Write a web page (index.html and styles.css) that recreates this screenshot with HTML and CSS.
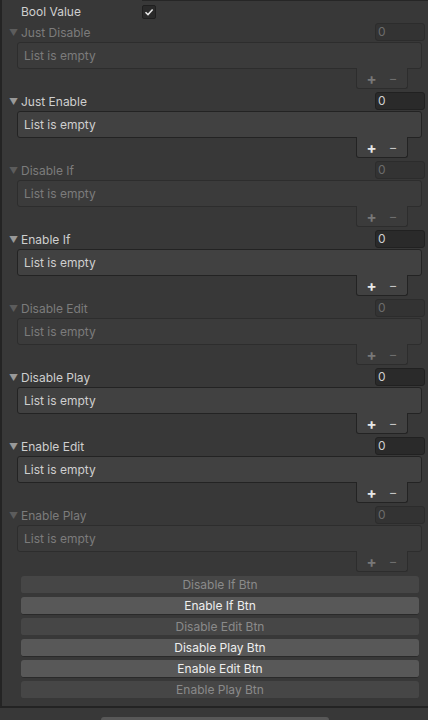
FILE: index.html
```html
<!DOCTYPE html>
<html>
<head>
<meta charset="utf-8">
<link rel="stylesheet" href="styles.css">
</head>
<body>
<div class="panel">
  <div class="cut"></div>
  <div class="bool-row">
    <span class="label">Bool Value</span>
    <span class="check"><svg width="10" height="10" viewBox="0 0 10 10"><path d="M1.5 5.2 L4 7.6 L8.6 2.4" fill="none" stroke="#e8e8e8" stroke-width="1.5"/></svg></span>
  </div>

  <div class="section off">
    <div class="head"><span class="tri">▼</span><span class="label">Just Disable</span><span class="count">0</span></div>
    <div class="box">List is empty</div>
    <div class="foot"><span class="plus">+</span><span class="minus">−</span></div>
  </div>
  <div class="section">
    <div class="head"><span class="tri">▼</span><span class="label">Just Enable</span><span class="count">0</span></div>
    <div class="box">List is empty</div>
    <div class="foot"><span class="plus">+</span><span class="minus">−</span></div>
  </div>
  <div class="section off">
    <div class="head"><span class="tri">▼</span><span class="label">Disable If</span><span class="count">0</span></div>
    <div class="box">List is empty</div>
    <div class="foot"><span class="plus">+</span><span class="minus">−</span></div>
  </div>
  <div class="section">
    <div class="head"><span class="tri">▼</span><span class="label">Enable If</span><span class="count">0</span></div>
    <div class="box">List is empty</div>
    <div class="foot"><span class="plus">+</span><span class="minus">−</span></div>
  </div>
  <div class="section off">
    <div class="head"><span class="tri">▼</span><span class="label">Disable Edit</span><span class="count">0</span></div>
    <div class="box">List is empty</div>
    <div class="foot"><span class="plus">+</span><span class="minus">−</span></div>
  </div>
  <div class="section">
    <div class="head"><span class="tri">▼</span><span class="label">Disable Play</span><span class="count">0</span></div>
    <div class="box">List is empty</div>
    <div class="foot"><span class="plus">+</span><span class="minus">−</span></div>
  </div>
  <div class="section">
    <div class="head"><span class="tri">▼</span><span class="label">Enable Edit</span><span class="count">0</span></div>
    <div class="box">List is empty</div>
    <div class="foot"><span class="plus">+</span><span class="minus">−</span></div>
  </div>
  <div class="section off">
    <div class="head"><span class="tri">▼</span><span class="label">Enable Play</span><span class="count">0</span></div>
    <div class="box">List is empty</div>
    <div class="foot"><span class="plus">+</span><span class="minus">−</span></div>
  </div>

  <div class="buttons">
    <div class="btn off">Disable If Btn</div>
    <div class="btn">Enable If Btn</div>
    <div class="btn off">Disable Edit Btn</div>
    <div class="btn">Disable Play Btn</div>
    <div class="btn">Enable Edit Btn</div>
    <div class="btn off">Enable Play Btn</div>
  </div>
</div>
<div class="bottom">
  <div class="big-btn"></div>
</div>
</body>
</html>
```
FILE: styles.css
```css
html, body {
  margin: 0;
  padding: 0;
  background: #383838;
  font-family: Inter, "Noto Sans", sans-serif;
  font-size: 12px;
  color: #cfcfcf;
  overflow: hidden;
}

.panel {
  border-left: 2px solid #242424;
  box-sizing: border-box;
  border-bottom: 2px solid #232323;
  height: 708px;
}

.cut {
  margin-left: 140px;
  width: 284px;
  height: 0;
  border: 1px solid #262626;
  border-top: none;
  border-radius: 0 0 3px 3px;
}

.bool-row {
  height: 21px;
  display: flex;
  align-items: center;
}

.bool-row .label {
  margin-left: 19px;
  width: 121px;
}

.check {
  width: 12px;
  height: 12px;
  border: 1px solid #1f1f1f;
  background: #2a2a2a;
  border-radius: 2px;
  display: flex;
  align-items: center;
  justify-content: center;
}

.section {
  height: 69px;
  display: flex;
  flex-direction: column;
}

.head {
  height: 20px;
  display: flex;
  align-items: center;
}

.tri {
  margin-left: 7px;
  width: 12px;
  font-size: 9px;
  color: #999999;
}

.count {
  margin-left: auto;
  margin-right: 3px;
  width: 46px;
  height: 16px;
  line-height: 16px;
  border: 1px solid #212121;
  background: #2a2a2a;
  border-radius: 3px;
  padding-left: 2px;
  color: #cfcfcf;
}

.box {
  margin-left: 15px;
  margin-right: 6px;
  height: 25px;
  line-height: 25px;
  border: 1px solid #232323;
  border-radius: 3px;
  background: #414141;
  padding-left: 6px;
  position: relative;
  z-index: 1;
}

.foot {
  align-self: flex-end;
  margin-right: 20px;
  margin-top: -1px;
  width: 50px;
  height: 20px;
  border: 1px solid #232323;
  border-top: none;
  border-radius: 0 0 3px 3px;
  background: #414141;
  position: relative;
  z-index: 2;
  display: flex;
  align-items: center;
  justify-content: center;
  gap: 12px;
  color: #e8e8e8;
}

.plus {
  font-size: 15px;
  font-weight: 700;
}

.minus {
  font-size: 13px;
  color: #c4c4c4;
}

.off .label,
.off .box {
  color: #7c7c7c;
}

.off .tri {
  color: #5c5c5c;
}

.off .count {
  background: #333333;
  border-color: #2c2c2c;
  color: #6c6c6c;
}

.off .box {
  background: #3b3b3b;
  border-color: #2d2d2d;
}

.off .foot {
  background: #3b3b3b;
  border-color: #2d2d2d;
  color: #787878;
}

.off .minus {
  color: #6e6e6e;
}

.buttons {
  margin: 2px 9px 0 19px;
  display: flex;
  flex-direction: column;
  gap: 3px;
}

.btn {
  height: 17px;
  line-height: 17px;
  text-align: center;
  background: #585858;
  border-bottom: 1px solid #2a2a2a;
  border-radius: 3px;
  color: #eeeeee;
}

.btn.off {
  background: #464646;
  border-bottom-color: #383838;
  color: #8a8a8a;
}

.bottom {
  height: 12px;
  display: flex;
}

.big-btn {
  margin-left: 101px;
  margin-top: 9px;
  width: 228px;
  height: 8px;
  background: #585858;
  border-radius: 3px 3px 0 0;
}
```
